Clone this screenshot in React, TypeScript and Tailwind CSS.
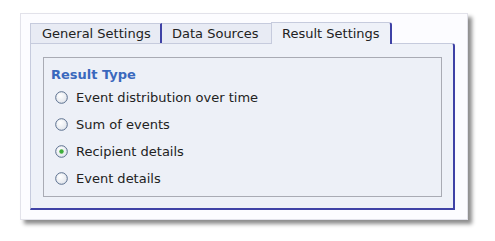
import React from "react";

const options = [
  { label: "Event distribution over time", checked: false },
  { label: "Sum of events", checked: false },
  { label: "Recipient details", checked: true },
  { label: "Event details", checked: false },
];

function Radio({ checked }: { checked: boolean }) {
  return (
    <svg width="13" height="13" viewBox="0 0 13 13" className="shrink-0">
      <defs>
        <radialGradient id="rg" cx="0.4" cy="0.35" r="0.7">
          <stop offset="0" stopColor="#ffffff" />
          <stop offset="1" stopColor="#dfe3ea" />
        </radialGradient>
      </defs>
      <circle cx="6.5" cy="6.5" r="5.8" fill="url(#rg)" stroke="#5a6f8e" strokeWidth="1" />
      {checked && <circle cx="6.5" cy="6.5" r="2.2" fill="#3fae3a" />}
    </svg>
  );
}

export default function App() {
  return (
    <div
      className="w-[495px] h-[241px] bg-white pt-[13px] pl-[20px]"
      style={{ fontFamily: "'DejaVu Sans', Verdana, sans-serif" }}
    >
      <div className="w-[448px] h-[207px] bg-[#fcfcff] border border-[#e2e2ea] shadow-[4px_4px_4px_rgba(0,0,0,0.45)] pl-[9px] pt-[8px]">
        <div className="flex items-end h-[21px] text-[13px] text-[#222]">
          <div className="h-[20px] w-[132px] bg-[#e8ebf4] border-t border-l border-[#c6cbdd] border-r-2 border-r-[#3f42a6] flex items-center pl-[11px]">
            General Settings
          </div>
          <div className="h-[20px] w-[109px] bg-[#e8ebf4] border-t border-[#c6cbdd] flex items-center pl-[10px]">
            Data Sources
          </div>
          <div className="h-[22px] w-[121px] bg-[#eef1f8] border-t border-l border-[#c6cbdd] border-r-2 border-r-[#3f42a6] rounded-tr-[3px] flex items-center pl-[10px] relative z-10 mb-[-1px]">
            Result Settings
          </div>
        </div>
        <div className="w-[425px] h-[167px] bg-[#eef1f8] border-t border-l border-[#c6cbdd] border-r-2 border-b-2 border-r-[#3f42a6] border-b-[#3f42a6] rounded-tr-[3px] pl-[12px] pt-[13px]">
          <div className="w-[399px] h-[140px] border border-[#a9abb4] bg-[#edf0f7] pl-[7px] pt-[8px]">
            <div className="text-[13px] font-bold text-[#3a68bd] leading-[18px]">Result Type</div>
            <div className="flex flex-col">
              {options.map((o) => (
                <div key={o.label} className="flex items-center h-[27px] pl-[4px] gap-[8px] text-[13px] text-[#222]">
                  <Radio checked={o.checked} />
                  <span>{o.label}</span>
                </div>
              ))}
            </div>
          </div>
        </div>
      </div>
    </div>
  );
}
